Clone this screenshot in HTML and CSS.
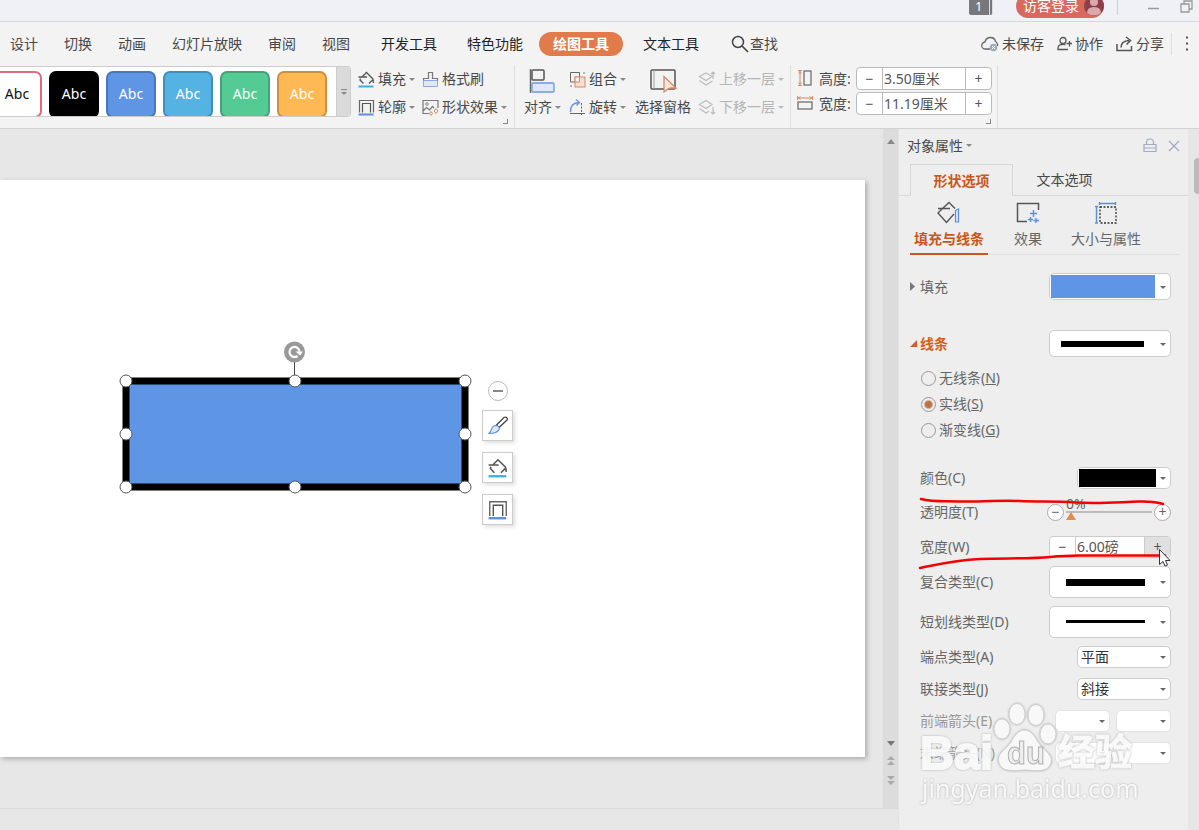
FILE: index.html
```html
<!DOCTYPE html>
<html lang="zh-CN">
<head>
<meta charset="utf-8">
<title>绘图工具</title>
<link rel="stylesheet" href="styles.css">
</head>
<body>
<svg class="defs" aria-hidden="true">
  <symbol id="bucket" viewBox="0 0 17 17"><path d="M.5 6H9M4 6 8.500 1.500 14.500 7.500M2.500 7.500 2 9 5.500 12.500M11 12.500 14.500 9M14.500 7Q15.500 9 15.500 12" fill="none" stroke="#555" stroke-width="1.300"/><path d="M.5 15.500H15.500" stroke="#41aee0" stroke-width="2"/></symbol>
  <symbol id="outline" viewBox="0 0 17 17"><path d="M1.500 13.500V1.500H15.500V13.500" fill="none" stroke="#666" stroke-width="1.200"/><path d="M4.500 13.500V4.500H12.500V13.500" fill="none" stroke="#555" stroke-width="1.200"/><path d="M.5 15.500H15.500" stroke="#5b8de0" stroke-width="2"/></symbol>
</svg>
<header class="titlebar">
  <span class="badge">1</span>
  <button class="login">访客登录<svg width="20" height="20" viewBox="0 0 20 20"><circle cx="10" cy="10" r="10" fill="#8f3f49"/><circle cx="10" cy="6" r="4" fill="#dba9ac"/><path d="M3 17Q3 11 10 11T17 17Q10 22 3 17Z" fill="#dba9ac"/></svg></button>
  <span class="title-rule"></span>
  <button class="plain" aria-label="最小化"><svg width="12" height="12"><path d="M0 7.500H11" stroke="#999" stroke-width="1.500"/></svg></button>
  <button class="plain restore" aria-label="还原"><svg width="13" height="13" viewBox="0 0 13 13"><path d="M1 4H9V12H1ZM4 4V1H12V9H9" fill="none" stroke="#999" stroke-width="1.300"/></svg></button>
</header>
<nav class="menu">
  <div class="tabs">
    <button>设计</button><button>切换</button><button>动画</button><button>幻灯片放映</button><button>审阅</button><button>视图</button>
  </div>
  <div class="tabs tools">
    <button>开发工具</button><button>特色功能</button>
  </div>
  <button class="pill">绘图工具</button>
  <button class="text-tool">文本工具</button>
  <button class="search"><svg width="18" height="18" viewBox="0 0 18 18"><circle cx="7" cy="7" r="5.500" fill="none" stroke="#444" stroke-width="1.500"/><path d="M11 11 17 17" stroke="#444" stroke-width="1.700"/></svg>查找</button>
  <div class="share">
    <button><svg width="18" height="16" viewBox="0 0 18 16"><path d="M9 13H4.500A3.500 3.500 0 0 1 4 6Q5 1.500 9.500 1.500 13.500 1.500 14.500 5.500 17 7 16.500 10" fill="none" stroke="#666" stroke-width="1.300"/><circle cx="12.500" cy="11.500" r="3.800" fill="#9fa9c0"/><path d="m11 10 3 3m0-3-3 3" stroke="#fff"/></svg>未保存</button>
    <button><svg width="15" height="15" viewBox="0 0 15 15"><circle cx="6" cy="4.500" r="3" fill="none" stroke="#555" stroke-width="1.300"/><path d="M8.500 8.500Q1 7.500 1 12V13.500H11M9.500 7.500H15M12.500 5V10.500" fill="none" stroke="#555" stroke-width="1.300"/></svg>协作</button>
    <button><svg width="17" height="16" viewBox="0 0 17 16"><path d="M1 8V14.500H15.500V10M5 11.500Q5 5 13 4.500M10 1 14.500 4.500 10.500 8.500" fill="none" stroke="#555" stroke-width="1.500"/></svg>分享</button>
    <span class="share-rule"></span>
    <button class="more" aria-label="更多"><svg width="4" height="16"><path d="M1 1.500H3M1 7.500H3M1 13.500H3" stroke="#555" stroke-width="2"/></svg></button>
  </div>
</nav>
<section class="ribbon">
  <div class="gallery">
    <div class="styles">
      <button class="style s-white">Abc</button><button class="style s-black">Abc</button><button class="style s-blue">Abc</button><button class="style s-sky">Abc</button><button class="style s-green">Abc</button><button class="style s-amber">Abc</button>
    </div>
    <button class="gallery-more" aria-label="更多样式"><svg width="6" height="6"><path d="M0 .5H6" stroke="#888"/><path d="M0 3H6L3 6Z" fill="#888"/></svg></button>
  </div>
  <div class="group look">
    <button class="drop"><svg width="17" height="17"><use href="#bucket"/></svg>填充</button>
    <button><svg width="17" height="17" viewBox="0 0 17 17"><path d="M1.500 9.500V15.500H15.500V9.500Z" fill="#dfe8f8" stroke="#8ba8df"/><path d="M1.500 9.500V7.500H6.500V1.500H10.500V7.500H15.500V9.500" fill="none" stroke="#777" stroke-width="1.200"/></svg>格式刷</button>
    <button class="drop"><svg width="17" height="17"><use href="#outline"/></svg>轮廓</button>
    <button class="drop"><svg width="17" height="17" viewBox="0 0 17 17"><path d="M7 14.500H1V1.500H16V9M1 12 4.500 8.500 7.500 11 10.500 7.500 12 9" fill="none" stroke="#777" stroke-width="1.200"/><circle cx="5" cy="5" r="1.300" fill="none" stroke="#888"/><path d="M14 9.500 16 12 14 14.500 12 12ZM9 12.500 10.500 14.500 9 16.500 7.500 14.500Z" fill="none" stroke="#d28a62"/></svg>形状效果</button>
    <span class="launcher"></span>
  </div>
  <div class="group arrange">
    <button class="tall drop"><svg width="26" height="26" viewBox="0 0 26 26"><path d="M1.500 1V25" stroke="#666" stroke-width="1.500"/><rect x="3" y="2" width="12" height="10" rx="1" fill="none" stroke="#555" stroke-width="1.500"/><rect x="3" y="15" width="22" height="9" rx="1" fill="#dfe8f8" stroke="#6d96df" stroke-width="1.300"/></svg><span>对齐</span></button>
    <div class="pair">
      <button class="drop"><svg width="17" height="17" viewBox="0 0 17 17"><path d="M1.500 1.500H10.500V11H1.500Z" fill="none" stroke="#666"/><rect x="6" y="6" width="10" height="10" fill="#f5dfd2" stroke="#d28a62"/><path d="M6 11V6H10.500V11Z" fill="#f3f3f3" stroke="#d28a62"/><path d="M1 15H3M14 2H16" stroke="#777"/></svg>组合</button>
      <button class="drop"><svg width="17" height="17" viewBox="0 0 17 17"><path d="M1.500 13Q1 4 10 3.500M7 .5 10.500 3.500 7.500 6.500" fill="none" stroke="#6d96df" stroke-width="1.300"/><path d="M1 14.500H16" stroke="#666"/><path d="M12.500 4V16" stroke="#666" stroke-dasharray="2 1.500"/></svg>旋转</button>
    </div>
    <button class="tall"><svg width="28" height="26" viewBox="0 0 28 26"><rect x="1" y="2" width="24" height="19" rx="1" fill="none" stroke="#555" stroke-width="1.500"/><path d="M4 2V21" stroke="#999"/><path d="M14 8.500V24L18.500 20.500 21 20H26Z" fill="#fae5d9" stroke="#d28a62" stroke-width="1.300"/></svg><span>选择窗格</span></button>
    <div class="pair disabled">
      <button class="drop" disabled><svg width="18" height="17" viewBox="0 0 18 17"><path d="M8 2 14 5.500 8 9.500 1.500 5.500ZM1.500 9.500 8 14 14.500 10M15 8V1M13 3 15 1 17 3" fill="none" stroke="#bbb" stroke-width="1.200"/></svg>上移一层</button>
      <button class="drop" disabled><svg width="18" height="17" viewBox="0 0 18 17"><path d="M8 1.500 14 5.500 8 9.500 1.500 5.500ZM1.500 9.500 8 14 11 12M15 8V15M13 13 15 15 17 13" fill="none" stroke="#bbb" stroke-width="1.200"/></svg>下移一层</button>
    </div>
  </div>
  <div class="group size">
    <div class="size-row"><svg width="16" height="17" viewBox="0 0 16 17"><path d="M1 .5H5M1 15.500H5M3 1V15M1.500 3.500 3 1.500 4.500 3.500M1.500 12.500 3 14.500 4.500 12.500" fill="none" stroke="#d28a62"/><rect x="7" y="1" width="7" height="14" fill="none" stroke="#666" stroke-width="1.200"/></svg><label for="h">高度:</label>
      <span class="stepper"><button aria-label="减小高度">−</button><input id="h" value="3.50厘米"><button aria-label="增大高度">+</button></span></div>
    <div class="size-row"><svg width="16" height="17" viewBox="0 0 16 17"><path d="M.5 1V5M15.500 1V5M1 3H15M3.500 1.500 1.500 3 3.500 4.500M12.500 1.500 14.500 3 12.500 4.500" fill="none" stroke="#d28a62"/><rect x="1" y="7" width="14" height="7" fill="none" stroke="#666" stroke-width="1.200"/></svg><label for="w">宽度:</label>
      <span class="stepper"><button aria-label="减小宽度">−</button><input id="w" value="11.19厘米"><button aria-label="增大宽度">+</button></span></div>
    <span class="launcher"></span>
  </div>
</section>
<main class="work">
  <div class="editor">
    <div class="canvas">
      <div class="slide">
        <svg class="shape" width="360" height="156" viewBox="0 0 360 156">
          <rect x="13" y="41" width="339" height="106" fill="#5e95e5" stroke="#000" stroke-width="7"/>
          <path d="M181.500 20V38" stroke="#444"/>
          <circle cx="181.500" cy="12" r="10.500" fill="#999"/>
          <path d="M184.500 16A5 5 0 1 1 186.500 11.500" fill="none" stroke="#fff" stroke-width="2.200"/><path d="M182.500 11.500H190L187 15.500Z" fill="#fff"/>
          <g fill="#fff" stroke="#555"><circle cx="13" cy="41" r="6"/><circle cx="182" cy="41" r="6"/><circle cx="352" cy="41" r="6"/><circle cx="13" cy="94" r="6"/><circle cx="352" cy="94" r="6"/><circle cx="13" cy="147" r="6"/><circle cx="182" cy="147" r="6"/><circle cx="352" cy="147" r="6"/></g>
        </svg>
        <div class="quick">
          <button class="collapse" aria-label="收起"><svg width="10" height="4"><path d="M0 2H10" stroke="#888" stroke-width="2"/></svg></button>
          <button class="quick-btn" aria-label="样式"><svg width="20" height="20" viewBox="0 0 20 20"><path d="M8.500 9 16 1.500Q18 .5 19 2T18 5L11 11.500Z" fill="#fff" stroke="#444" stroke-width="1.300"/><path d="M1 17.500Q3 15.500 3.500 13 5 9.500 8 9.500 12 10 11 13.500 9 17.500 1 17.500Z" fill="#dfe8f8" stroke="#5b8de0" stroke-width="1.200"/></svg></button>
          <button class="quick-btn" aria-label="填充"><svg width="20" height="20"><use href="#bucket"/></svg></button>
          <button class="quick-btn" aria-label="轮廓"><svg width="20" height="20"><use href="#outline"/></svg></button>
        </div>
      </div>
    </div>
    <div class="scrollbar">
      <svg width="8" height="5"><path d="M0 5 4 0 8 5Z" fill="#888"/></svg>
      <div class="scroll-foot">
        <svg width="8" height="5"><path d="M0 0 4 5 8 0Z" fill="#777"/></svg>
        <svg width="8" height="10"><path d="M0 4 4 0 8 4ZM0 9 4 5 8 9Z" fill="#aaa"/></svg>
        <svg width="8" height="10"><path d="M0 0 4 4 8 0ZM0 5 4 9 8 5Z" fill="#aaa"/></svg>
      </div>
    </div>
    <div class="status"></div>
  </div>
  <aside class="panel">
    <div class="panel-head">
      <button class="drop">对象属性</button>
      <span class="panel-actions">
        <button class="plain" aria-label="锁定"><svg width="14" height="15" viewBox="0 0 14 15"><path d="M1 6.500H13V13.500H1ZM3.500 6.500V4Q3.500 1 7 1T10.500 4V6.500M1 10H13" fill="none" stroke="#a3abc4" stroke-width="1.200"/></svg></button>
        <button class="plain" aria-label="关闭"><svg width="12" height="12"><path d="m1 1 10 10m0-10-10 10" stroke="#a3abc4" stroke-width="1.300"/></svg></button>
      </span>
    </div>
    <div class="panel-tabs"><button class="active">形状选项</button><button>文本选项</button></div>
    <div class="subtabs">
      <button class="active"><svg width="24" height="24" viewBox="0 0 24 24"><path d="M1 7.500H13M5.500 7.500 12 1.500 18 7.500M5.500 7.500 1 12 9.500 21.500 17 13" fill="none" stroke="#555" stroke-width="1.400"/><path d="M18.500 9.500 21.500 8V21H18.500Z" fill="#dfe8f8" stroke="#5b8de0" stroke-width="1.200"/></svg>填充与线条</button>
      <button><svg width="24" height="24" viewBox="0 0 24 24"><path d="M11 20.500H1.500V2.500H22.500V9" fill="none" stroke="#555" stroke-width="1.500"/><path d="M17.500 9V16M14 12.500H21M14.500 16V21M12 18.500H17M20 17V22M17.500 19.500H23" stroke="#5b8de0" stroke-width="1.400"/></svg>效果</button>
      <button><svg width="24" height="24" viewBox="0 0 24 24"><path d="M5 2.500H22M5.500 1V4M21.500 1V4M2.500 5V22.500M1 5.500H4M1 22H4" stroke="#5b8de0" stroke-width="1.400"/><rect x="6" y="6" width="16" height="16" fill="none" stroke="#333" stroke-width="1.300" stroke-dasharray="2 1.500"/></svg>大小与属性</button>
    </div>
    <form class="form">
      <div class="row section fill-row"><label for="fill"><svg width="6" height="9"><path d="M0 0 5 4.500 0 9Z" fill="#777"/></svg>填充</label><span class="dd wide"><select id="fill" class="sw-fill"><option label=" "></option></select></span></div>
      <div class="row section line-row"><label for="line"><svg width="7" height="7"><path d="M7 0V7H0Z" fill="#d0601f"/></svg>线条</label><span class="dd wide"><select id="line" class="sw-line"><option label=" "></option></select></span></div>
      <div class="radios">
        <label><input type="radio" name="kind"><span>无线条(<u>N</u>)</span></label>
        <label><input type="radio" name="kind" checked><span>实线(<u>S</u>)</span></label>
        <label><input type="radio" name="kind"><span>渐变线(<u>G</u>)</span></label>
      </div>
      <div class="row color-row"><label for="color">颜色(C)</label><span class="dd mid"><select id="color" class="sw-color"><option label=" "></option></select></span></div>
      <div class="row alpha-row"><label for="alpha">透明度(T)</label>
        <div class="alpha"><button type="button" class="round" aria-label="减小透明度">−</button><span class="track"><output class="percent" for="alpha">0%</output><input id="alpha" type="range" min="0" max="100" value="0"></span><button type="button" class="round" aria-label="增大透明度">+</button></div></div>
      <div class="row width-row"><label for="weight">宽度(W)</label><span class="stepper weight"><button type="button" aria-label="减小线宽">−</button><input id="weight" value="6.00磅"><button type="button" class="hover" aria-label="增大线宽">+</button></span></div>
      <div class="row tall-row"><label for="compound">复合类型(C)</label><span class="dd wide"><select id="compound" class="sw-compound"><option label=" "></option></select></span></div>
      <div class="row tall-row"><label for="dash">短划线类型(D)</label><span class="dd wide"><select id="dash" class="sw-dash"><option label=" "></option></select></span></div>
      <div class="row cap-row"><label for="cap">端点类型(A)</label><span class="dd mid"><select id="cap"><option>平面</option></select></span></div>
      <div class="row end-row"><label for="join">联接类型(J)</label><span class="dd mid"><select id="join"><option>斜接</option></select></span></div>
      <div class="row end-row off"><label for="head">前端箭头(E)</label><span class="dd small"><select id="head" disabled><option label=" "></option></select></span><span class="dd small"><select aria-label="前端箭头大小" disabled><option label=" "></option></select></span></div>
      <div class="row end-row off"><label for="tail">末端箭头(N)</label><span class="dd small"><select id="tail" disabled><option label=" "></option></select></span><span class="dd small"><select aria-label="末端箭头大小" disabled><option label=" "></option></select></span></div>
    </form>
    <svg class="marks" width="289" height="90" viewBox="0 0 289 90">
      <path d="M22 9C34 12 42 11 59 11.500S101 10 121 11 153 11 177 12.500 221 12 240 11.500 258 13 264 14" fill="none" stroke="#f40000" stroke-width="2.500" stroke-linecap="round"/>
      <path d="M21 78C32 76 55 70 81 69S130 69 151 67 170 65.500 190 65.500H266" fill="none" stroke="#f40000" stroke-width="2.500" stroke-linecap="round"/>
      <path d="M260.500 59.500V74.500L264 71.500 266 76 268.500 75 266.500 70.500H271Z" fill="#fff" stroke="#334"/>
    </svg>
    <svg class="watermark" width="230" height="110" viewBox="0 0 230 110">
      <g class="wm-shape"><ellipse cx="82" cy="27" rx="8" ry="10"/><ellipse cx="97" cy="12" rx="8" ry="10.500"/><ellipse cx="116" cy="13" rx="8" ry="10.500"/><ellipse cx="128" cy="32" rx="8" ry="10"/><path d="M79 61C76 51 86 48 91 40 99 24 110 24 118 40 123 48 134 53 131 61 128 70 119 69 105 68 91 69 82 70 79 61Z"/></g>
      <text class="wm-logo" x="0" y="67">Bai</text>
      <text class="wm-du" x="87" y="62">du</text>
      <text class="wm-cn" x="138" y="64">经验</text>
      <text class="wm-url" x="2" y="96">jingyan.baidu.com</text>
    </svg>
  </aside>
  <div class="edge"><span class="thumb"></span></div>
</main>
</body>
</html>
```
FILE: styles.css
```css
* { box-sizing: border-box; }
body {
  margin: 0;
  min-height: 100vh;
  display: flex;
  flex-direction: column;
  overflow-x: hidden;
  background: #f3f3f3;
  color: #484848;
  font: 14px/20px "Noto Sans", "Noto Sans CJK SC", sans-serif;
}
button, input, select { font: inherit; color: inherit; margin: 0; padding: 0; border: 0; background: none; }
button { display: flex; align-items: center; white-space: nowrap; }
svg { display: block; flex: none; }
.defs { position: absolute; width: 0; height: 0; }

.titlebar { height: 22px; display: flex; justify-content: flex-end; background: #f0f1f7; border-bottom: 1px solid #d3d9e0; overflow: hidden; }
.badge { width: 24px; height: 15px; padding-left: 6px; background: #77787c; color: #fff; font-size: 13px; line-height: 12px; border-right: 4px double #ddd; border-radius: 0 0 2px 2px; }
.login { width: 88px; height: 24px; margin: -6px 0 0 23px; padding-left: 7px; gap: 5px; border-radius: 12px; background: #d9695f; color: #fff; }
.title-rule { width: 1px; height: 15px; margin: 0 30px 0 13px; background: #ccd0d6; }
.plain { height: 14px; }
.restore { margin: 0 6px 0 20px; height: 12px; }

.menu { height: 43px; display: flex; align-items: center; padding-left: 10px; }
.tabs { display: flex; gap: 26px; }
.tools { margin-left: 31px; gap: 30px; }
.tools, .text-tool { color: #222; }
.pill { height: 24px; margin-left: 16px; padding: 0 14px; border-radius: 12px; background: #e27b4b; color: #fff; font-weight: bold; }
.text-tool { margin-left: 20px; }
.search { gap: 1px; margin-left: 32px; }
.share { margin-left: auto; display: flex; align-items: center; gap: 13px; padding-right: 10px; }
.share button { gap: 3px; }
.share-rule { width: 1px; height: 22px; background: #ddd; margin-left: -6px; }

.ribbon { height: 64px; display: flex; border-bottom: 1px solid #d2d2d2; overflow: hidden; }
.gallery { width: 351px; height: 51px; margin-top: 1px; display: flex; justify-content: space-between; background: #fff; border: 1px solid #ccc; border-left: 0; border-radius: 0 4px 4px 0; overflow: hidden; }
.styles { display: flex; gap: 7px; margin: 4px 0 0 -8px; }
.style { width: 50px; height: 47px; padding-bottom: 2px; justify-content: center; border: 2px solid; border-radius: 7px; color: #fff; }
.s-white { border-color: #e06a80; color: #111; background: #fff; }
.s-black { border-color: #000; background: #000; }
.s-blue { border-color: #4877bd; background: #5e95e5; }
.s-sky { border-color: #3e8fba; background: #55b3e3; }
.s-green { border-color: #41a377; background: #54cb95; }
.s-amber { border-color: #ca9142; background: #feb954; }
.gallery-more { width: 14px; justify-content: center; background: #dadada; border-left: 1px solid #ccc; }
.group { position: relative; border-right: 1px solid #ddd; }
.group button, .panel-head .drop { gap: 3px; }
.drop::after { content: ""; border: 3px solid transparent; border-top-color: #888; border-bottom: 0; }
.look { width: 164px; padding-left: 7px; display: grid; grid-template-columns: 64px 1fr; grid-template-rows: 28px 28px; }
.launcher { position: absolute; right: 6px; bottom: 4px; width: 5px; height: 5px; border: solid #888; border-width: 0 1px 1px 0; }
.arrange { width: 276px; display: flex; padding-left: 9px; }
.arrange .tall { display: grid; grid-template-columns: auto auto; grid-template-rows: 30px 20px; row-gap: 2px; justify-content: start; align-content: start; height: 56px; }
.tall svg { grid-column: 1 / 3; justify-self: start; margin-top: 2px; margin-left: 5px; }
.tall:not(.drop) svg { margin-left: 15px; }
.arrange .pair { display: grid; grid-template-rows: 28px 28px; margin-left: 8px; }
.pair + .tall { margin-left: 9px; }
.arrange .disabled { color: #b5b5b5; margin-left: 4px; }
.disabled .drop::after { border-top-color: #bbb; }
.size { width: 207px; padding: 1px 0 0 6px; }
.size-row { display: flex; align-items: center; height: 25px; }
.size-row label { width: 37px; margin-left: 6px; }
.stepper { display: flex; width: 136px; height: 23px; background: #fff; border: 1px solid #bbb; border-radius: 4px; color: #555; overflow: hidden; }
.stepper button { width: 25px; flex: none; justify-content: center; }
.stepper input { flex: 1; min-width: 0; padding-left: 1px; border: solid #bbb; border-width: 0 1px; }

.work { flex: 1; display: grid; grid-template-columns: 1fr 290px 11px; }
.editor { display: grid; grid-template-columns: 1fr 15px; grid-template-rows: 1fr 22px; background: #e7e7e7; }
.canvas { display: flex; padding: 51px 18px 51px 0; }
.slide { position: relative; flex: 1; background: #fff; box-shadow: 2px 2px 5px #aaa; }
.shape { position: absolute; left: 113px; top: 160px; }
.quick { position: absolute; left: 482px; top: 201px; display: grid; gap: 11px; justify-items: center; }
.collapse { width: 20px; height: 20px; margin-bottom: -2px; justify-content: center; border: 1px solid #bbb; border-radius: 50%; background: #fff; }
.quick-btn { width: 31px; height: 31px; justify-content: center; border: 1px solid #ccc; background: #fff; box-shadow: 2px 2px 4px #ddd; }
.scrollbar { display: flex; flex-direction: column; justify-content: space-between; align-items: center; padding: 10px 0 22px; background: #dcdcdc; }
.scroll-foot { display: grid; gap: 10px; }
.status { grid-column: 1 / 3; border-top: 1px solid #dadada; }

.panel { position: relative; background: #eee; border-left: 1px solid #e2e2e2; }
.panel-head { height: 35px; display: flex; justify-content: space-between; align-items: center; padding: 0 8px 2px; }
.panel-actions { display: flex; align-items: center; gap: 11px; }
.panel-tabs { display: flex; height: 32px; padding-left: 11px; background: linear-gradient(#dadada, #dadada) bottom / 100% 1px no-repeat; }
.panel-tabs button { width: 103px; justify-content: center; }
.panel-tabs .active { border: 1px solid #d6d6d6; border-bottom: 0; background: #eee; }
.active { color: #c9571c; font-weight: bold; }
.subtabs { display: flex; height: 59px; margin: 0 8px 0 11px; border-bottom: 1px solid #e0e0e0; gap: 26px; }
.subtabs button { flex-direction: column; padding: 5px 0 0; gap: 4px; height: 59px; }
.subtabs button:first-child { padding-inline: 4px; border-bottom: 2px solid #c9571c; }
.subtabs button + button { color: #666; }
.subtabs button:last-child { margin-left: 3px; }

.form { color: #666; padding: 18px 17px 0 21px; }
.row { display: flex; align-items: center; height: 22px; gap: 6px; }
.row > label { margin-right: auto; }
.section { height: 27px; }
.section label { display: flex; align-items: center; gap: 4px; margin-left: -10px; }
.line-row { margin-top: 30px; }
.line-row label { color: #d0601f; font-weight: bold; gap: 3px; }
.radios { margin-top: 8px; }
.radios label { display: flex; align-items: center; height: 26px; gap: 3px; padding-left: 1px; }
.radios input { appearance: none; width: 15px; height: 15px; border: 1px solid #999; border-radius: 50%; }
.radios input:checked { background: radial-gradient(#bd7343 0 3px, #eee 5px); }
.color-row { margin-top: 24px; }
.alpha-row { margin-top: 11px; height: 24px; }
.width-row { margin-top: 12px; }
.tall-row { margin-top: 8px; height: 32px; }
.cap-row { margin-top: 8px; }
.end-row { margin-top: 10px; }
.off { color: #999; }
.dd { position: relative; height: 100%; }
.dd::after { content: ""; position: absolute; right: 5px; top: 50%; margin-top: -1px; border: 3px solid transparent; border-top-color: #666; border-bottom: 0; pointer-events: none; }
.dd select { appearance: none; width: 100%; height: 100%; padding-left: 3px; background: #fff no-repeat; border: 1px solid #ccc; border-radius: 5px; color: #333; opacity: 1; }
.off .dd select { border-color: #e2e2e2; }
.wide { width: 122px; }
.mid { width: 94px; }
.small { width: 55px; }
.dd .sw-fill { background-image: linear-gradient(#5e95e5, #5e95e5); background-size: 104px 23px; background-position: 1px 1px; }
.dd .sw-line { background-image: linear-gradient(#000, #000); background-size: 83px 6px; background-position: 11px 10px; }
.dd .sw-color { background-image: linear-gradient(#000, #000); background-size: 77px 18px; background-position: 1px 1px; }
.dd .sw-compound { background-image: linear-gradient(#000, #000); background-size: 79px 7px; background-position: 16px 12px; }
.dd .sw-dash { background-image: linear-gradient(#000, #000); background-size: 79px 3px; background-position: 16px 13px; }
.alpha { display: flex; align-items: center; gap: 2px; }
.round { width: 17px; height: 17px; justify-content: center; border: 1px solid #aaa; border-radius: 50%; background: #fff; line-height: 14px; }
.track { position: relative; width: 86px; height: 24px; }
.track input { appearance: none; display: block; width: 100%; height: 24px; background: linear-gradient(#bbb, #bbb) center / 100% 2px no-repeat; }
.track input::-webkit-slider-thumb { appearance: none; width: 10px; height: 8px; margin-top: 8px; background: #e08b50; clip-path: polygon(50% 0, 100% 100%, 0 100%); }
.percent { position: absolute; left: 0; top: -6px; line-height: 20px; pointer-events: none; }
.weight { width: 122px; height: 22px; border-color: #ccc; }
.weight input { border-color: #ccc; }
.weight .hover { background: #e0e0e0; }
.marks { position: absolute; left: 0; top: 361px; pointer-events: none; }
.watermark { position: absolute; left: 21px; top: 573px; overflow: visible; pointer-events: none; filter: drop-shadow(0 0 1px #aaa); opacity: 0.9; }
.watermark text, .wm-shape { fill: #fafafa; }
.wm-shape { stroke: #ccc; stroke-width: 1px; }
.watermark .wm-logo { font: bold 47px "Liberation Sans", sans-serif; stroke: #fafafa; stroke-width: 2px; }
.watermark .wm-du { font: bold 31px "Liberation Sans", sans-serif; fill: #eee; stroke: #aaa; stroke-width: 1px; }
.wm-cn { font: bold 37px "Noto Sans CJK SC", sans-serif; stroke: #fafafa; stroke-width: 1px; }
.wm-url { font: 25px "Noto Sans", sans-serif; }
.edge { background: #e6e6e6; padding: 29px 0 0 6px; }
.thumb { display: block; height: 36px; background: #bbb; border-radius: 4px 0 0 4px; }
```
